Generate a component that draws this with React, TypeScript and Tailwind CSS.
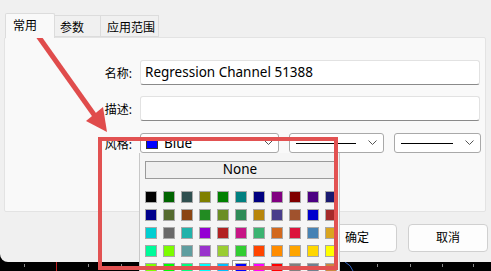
import { ReactElement } from "react"

const font = { fontFamily: "'Noto Sans', 'Noto Sans CJK SC', sans-serif" }

const colors: string[][] = [
  ["#000000", "#006400", "#2f4f4f", "#808000", "#008000", "#008080", "#000080", "#800080", "#800000", "#4b0082", "#191970"],
  ["#00008b", "#556b2f", "#8b4513", "#228b22", "#6b8e23", "#2e8b57", "#b8860b", "#483d8b", "#a0522d", "#0000cd", "#a52a2a"],
  ["#00ced1", "#696969", "#20b2aa", "#9400d3", "#b22222", "#c71585", "#3cb371", "#d2691e", "#dc143c", "#4682b4", "#daa520"],
  ["#00fa9a", "#7cfc00", "#5f9ea0", "#9932cc", "#9acd32", "#32cd32", "#ff4500", "#ff8c00", "#ffa500", "#ffd700", "#ffff00"],
  ["#7fff00", "#00ff00", "#00ff7f", "#00ffff", "#00bfff", "#0000ff", "#ff00ff", "#ff0000", "#808080", "#708090", "#cd853f"],
]

const Chevron = (): ReactElement => (
  <svg width="9" height="6" viewBox="0 0 9 6" className="shrink-0">
    <path d="M0.5 0.5 L4.5 4.5 L8.5 0.5" fill="none" stroke="#555" strokeWidth="1" />
  </svg>
)

const LineCombo = ({ w, line }: { w: string; line: string }): ReactElement => (
  <div className={`${w} h-[20px] flex items-center gap-[6px] pl-[6px] pr-[6px] bg-white border border-[#a9a9a9] rounded-[3px]`}>
    <div className={`${line} h-px bg-black`} />
    <div className="flex-1" />
    <Chevron />
  </div>
)

const App = (): ReactElement => {
  return (
    <div className="relative w-[491px] h-[271px] bg-black overflow-hidden text-[12px] text-black whitespace-nowrap" style={font}>
      <div className="h-[262px] bg-[#f0f0f0] rounded-bl-[8px] flex flex-col">
        {/* tabs */}
        <div className="flex items-end pl-[5px] pt-[13px] h-[37px]">
          <div className="w-[50px] h-[25px] -mb-px z-10 bg-[#f9f9f9] border border-b-0 border-[#dcdcdc] rounded-t-[2px] pl-[7px] pt-[4px] leading-[16px]">常用</div>
          <div className="w-[46px] h-[22px] bg-[#f0f0f0] border border-l-0 border-[#dcdcdc] pl-[5px] pt-[4px] leading-[16px]">参数</div>
          <div className="w-[58px] h-[22px] bg-[#f0f0f0] border border-l-0 border-[#dcdcdc] pl-[6px] pt-[4px] leading-[16px]">应用范围</div>
        </div>

        {/* panel */}
        <div className="ml-[4px] w-[482px] h-[175px] bg-[#f9f9f9] border border-[#e3e3e3] rounded-[2px] pt-[22px] flex flex-col">
          <div className="flex items-center h-[25px]">
            <div className="w-[127px] text-right pt-[2px]">名称:</div>
            <div className="ml-[8px] w-[340px] h-[25px] bg-white border border-[#e2e2e2] border-b-[#8a8a8a] rounded-[3px] pl-[4px] flex items-center text-[13.5px]">Regression Channel 51388</div>
          </div>
          <div className="flex items-center h-[25px] mt-[11px]">
            <div className="w-[127px] text-right pt-[2px]">描述:</div>
            <div className="ml-[8px] w-[340px] h-[25px] bg-white border border-[#e2e2e2] border-b-[#8a8a8a] rounded-[3px]" />
          </div>
          <div className="flex items-center h-[20px] mt-[12px]">
            <div className="w-[127px] text-right pt-[4px]">风格:</div>
            <div className="ml-[8px] w-[139px] h-[20px] bg-white border border-[#a9a9a9] rounded-[3px] flex items-center pl-[5px] pr-[5px]">
              <div className="w-[12px] h-[11px] bg-[#0000ff] border border-[#333]" />
              <div className="ml-[6px] text-[13.5px] leading-none pt-[1px]">Blue</div>
              <div className="flex-1" />
              <Chevron />
            </div>
            <div className="ml-[10px]">
              <LineCombo w="w-[95px]" line="w-[65px]" />
            </div>
            <div className="ml-[10px]">
              <LineCombo w="w-[87px]" line="w-[57px]" />
            </div>
          </div>
        </div>

        {/* buttons */}
        <div className="flex justify-end gap-[11px] pr-[3px] mt-[12px]">
          <div className="w-[80px] h-[28px] bg-[#fdfdfd] border border-[#d0d0d0] rounded-[4px] flex items-center justify-center">确定</div>
          <div className="w-[80px] h-[28px] bg-[#fdfdfd] border border-[#d0d0d0] rounded-[4px] flex items-center justify-center">取消</div>
        </div>
      </div>

      {/* chart strip below the dialog */}
      <div className="relative h-[9px]">
        {[24, 88, 121, 377, 410, 442, 473].map((x) => (
          <div key={x} className="absolute top-[2px] w-px h-[3px] bg-[#8a8a8a]" style={{ left: x }} />
        ))}
        <div className="absolute top-0 left-[56px] w-px h-[9px] bg-[#c02020]" />
        <svg className="absolute top-0 left-[344px]" width="12" height="9" viewBox="0 0 12 9">
          <path d="M1 0 Q7 3 9 9" fill="none" stroke="#3060c0" strokeWidth="1" />
        </svg>
      </div>

      {/* colour picker popup */}
      <div className="absolute left-[139px] top-[153px] w-[201px] h-[118px] bg-[#f5f5f5] border-l border-r border-[#c8c8c8] pl-[5px] pt-[8px]">
        <div className="w-[190px] h-[18px] bg-[#efefef] border border-[#9a9a9a] flex items-center justify-center text-[13.5px] leading-none">None</div>
        <div className="mt-[12px] flex flex-col gap-[6px]">
          {colors.map((row, r) => (
            <div key={r} className="flex gap-[6px]">
              {row.map((c, i) => (
                <div key={i} className={`w-[12px] h-[12px] border border-[#a8a8a8] ${r === 4 && i === 5 ? "outline outline-2 outline-white ring-[3px] ring-[#9a9a9a]" : ""}`} style={{ backgroundColor: c }} />
              ))}
            </div>
          ))}
        </div>
      </div>

      {/* red highlight box */}
      <div className="absolute left-[98px] top-[137px] w-[240px] h-[133px] border-[4px] border-[#e25252]" />

      {/* red arrow */}
      <svg className="absolute inset-0 pointer-events-none" width="491" height="271" viewBox="0 0 491 271">
        <line x1="31" y1="26" x2="95" y2="116" stroke="#e04c4c" strokeWidth="5" />
        <polygon points="107,132 86,121 103,107" fill="#e04c4c" />
      </svg>
    </div>
  )
}

export default App
